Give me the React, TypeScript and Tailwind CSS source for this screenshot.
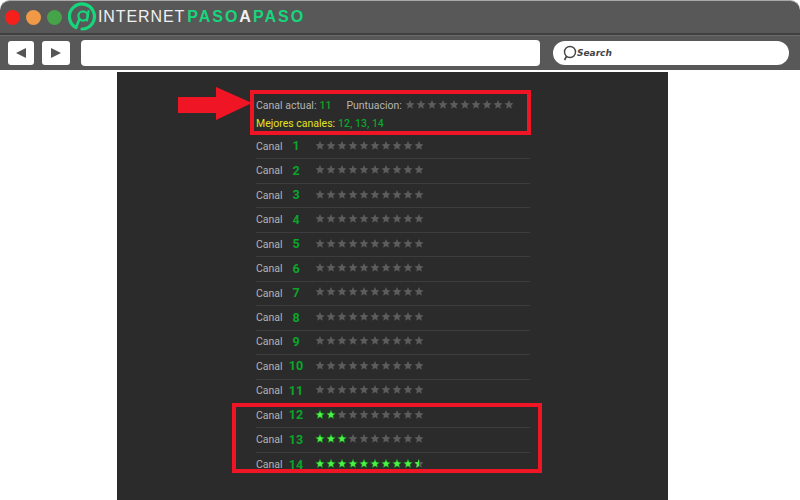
const channels = [
  { id: 1, lit: 0 },
  { id: 2, lit: 0 },
  { id: 3, lit: 0 },
  { id: 4, lit: 0 },
  { id: 5, lit: 0 },
  { id: 6, lit: 0 },
  { id: 7, lit: 0 },
  { id: 8, lit: 0 },
  { id: 9, lit: 0 },
  { id: 10, lit: 0 },
  { id: 11, lit: 0 },
  { id: 12, lit: 2 },
  { id: 13, lit: 3 },
  { id: 14, lit: 9.5 },
]

const STAR = 'M5 .6l1.3 3 3.2.3-2.4 2.1.7 3.2L5 7.6 2.2 9.2l.7-3.2L.5 3.9l3.2-.3z'

function Stars({ lit }: { lit: number }) {
  return (
    <svg width="110" height="11" viewBox="0 0 110 11" className="shrink-0">
      {Array.from({ length: 10 }).map((_, i) => {
        const on = i + 1 <= lit
        const half = !on && i < lit
        return (
          <g key={i} transform={`translate(${i * 11} 0.5)`}>
            <path d={STAR} fill={on ? '#4ef04a' : '#5c5c5c'} stroke={on ? '#0c6b12' : 'none'} strokeWidth="0.6" />
            {half && <path d="M5 .6L3.7 3.6.5 3.9l2.4 2.1-.7 3.2L5 7.6z" fill="#4ef04a" />}
          </g>
        )
      })}
    </svg>
  )
}

function Logo() {
  return (
    <div className="flex items-center">
      <svg width="30" height="30" viewBox="0 0 30 30" fill="none">
        <path d="M8 25.5A12.5 12.5 0 1 1 14 27" stroke="#16d67c" strokeWidth="3.2" strokeLinecap="round" />
        <path d="M8 25.5L11.5 17" stroke="#16d67c" strokeWidth="2.6" strokeLinecap="round" />
        <circle cx="15" cy="14" r="4.6" stroke="#16d67c" strokeWidth="2.2" />
        <path d="M20.5 9L19 18.5" stroke="#16d67c" strokeWidth="2.2" strokeLinecap="round" />
      </svg>
      <div className="flex font-['Liberation_Sans',sans-serif] text-[16px] leading-none">
        <span className="tracking-[0.9px] text-[#f0f0f0]">INTERNET</span>
        <span className="ml-[2px] font-bold tracking-[2px] text-[#16d67c]">PASO</span>
        <span className="font-bold tracking-[2px] text-[#f0f0f0]">A</span>
        <span className="font-bold tracking-[2px] text-[#16d67c]">PASO</span>
      </div>
    </div>
  )
}

export default function App() {
  return (
    <div className="relative flex h-[500px] w-[800px] flex-col overflow-hidden bg-white font-['Roboto',sans-serif]">
      <div className="flex h-[33px] items-center rounded-t-[10px] border-t border-[#a8a8a8] bg-[#585858] pl-[5px]">
        <div className="flex gap-[6px]">
          <span className="h-[15px] w-[15px] rounded-full bg-[#f5201c]" />
          <span className="h-[15px] w-[15px] rounded-full bg-[#f09a48]" />
          <span className="h-[15px] w-[15px] rounded-full bg-[#45a34a]" />
        </div>
        <div className="ml-[6px]">
          <Logo />
        </div>
      </div>
      <div className="h-[2px] bg-[#3f3f3f]" />
      <div className="flex h-[35px] items-center border-t border-[#6a6a6a] bg-[#585858] pl-[8px]">
        <button className="flex h-[24px] w-[26px] items-center justify-center rounded-[3px] bg-white">
          <span className="h-0 w-0 border-y-[5px] border-r-[10px] border-y-transparent border-r-[#555555]" />
        </button>
        <button className="ml-[8px] flex h-[24px] w-[28px] items-center justify-center rounded-[3px] bg-white">
          <span className="h-0 w-0 border-y-[5px] border-l-[10px] border-y-transparent border-l-[#555555]" />
        </button>
        <div className="ml-[11px] h-[26px] w-[459px] rounded-[4px] bg-white" />
        <div className="ml-[13px] flex h-[24px] w-[236px] items-center rounded-full bg-white pl-[9px]">
          <svg width="15" height="16" viewBox="0 0 15 16" fill="none">
            <circle cx="8" cy="7" r="5.5" stroke="#444444" strokeWidth="1.4" />
            <path d="M4.5 11.5L2.5 15" stroke="#444444" strokeWidth="1.6" />
          </svg>
          <span className="font-['DejaVu_Sans',sans-serif] text-[9px] font-bold italic leading-none text-[#444444]">Search</span>
        </div>
      </div>
      <div className="ml-[117px] mt-[2px] flex w-[551px] flex-1 flex-col bg-[#2b2b2b] pl-[139px] pr-[138px] pt-[26px] text-[10.5px] text-[#b4b4b4]">
        <div className="flex h-[16px] items-center">
          <span>Canal actual:</span>
          <span className="ml-[3px] font-medium text-[#0aa52a]">11</span>
          <span className="ml-[15px]">Puntuacion:</span>
          <span className="ml-[3px] mb-[3px]">
            <Stars lit={0} />
          </span>
        </div>
        <div className="mt-[2px] flex h-[16px] items-center">
          <span className="text-[#e3e31c]">Mejores canales:</span>
          <span className="ml-[3px] font-medium text-[#0aa52a]">12, 13, 14</span>
        </div>
        <div className="mt-[3px] flex flex-col">
          {channels.map((c) => (
            <div key={c.id} className="flex h-[24.46px] items-center border-b border-[#3d3d3d] last:border-b-0">
              <span className="w-[30px]">Canal</span>
              <span className="w-[20px] text-center text-[12.5px] font-bold text-[#0aa52a]">{c.id}</span>
              <span className="mb-[3px] ml-[9px]">
                <Stars lit={c.lit} />
              </span>
            </div>
          ))}
        </div>
      </div>
      <div className="absolute left-[250px] top-[90px] h-[45px] w-[281px] border-[4px] border-[#f01524]" />
      <div className="absolute left-[232px] top-[403px] h-[70px] w-[310px] border-[4px] border-[#f01524]" />
      <svg className="absolute left-[178px] top-[85px]" width="76" height="36" viewBox="0 0 76 36">
        <path d="M0 12H38V2L74 18 38 35V28H0z" fill="#f01524" />
      </svg>
    </div>
  )
}
